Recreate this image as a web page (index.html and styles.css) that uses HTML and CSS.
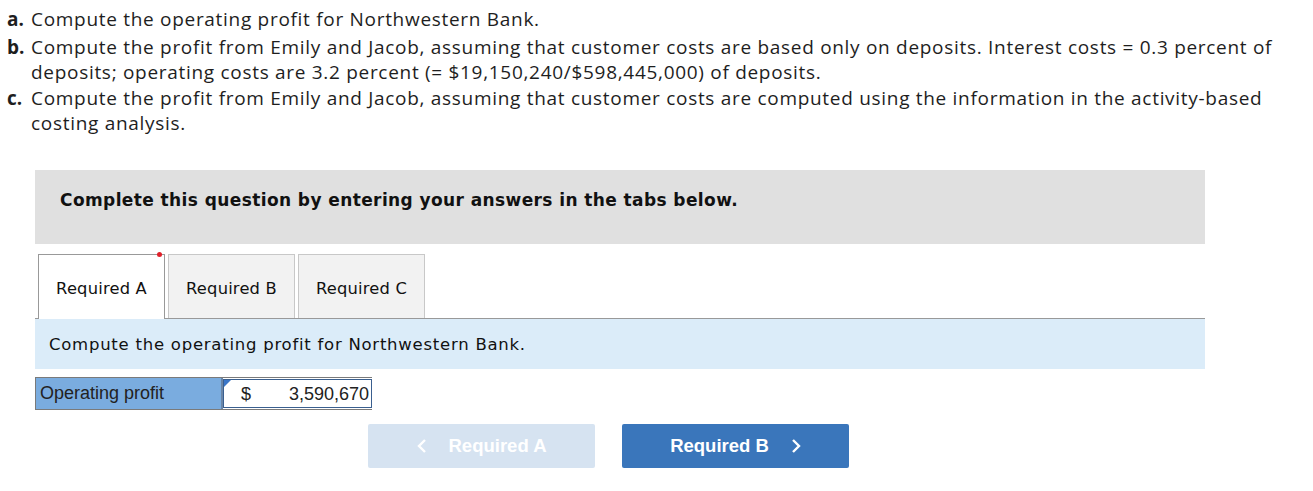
FILE: index.html
```html
<!DOCTYPE html>
<html>
<head>
<meta charset="utf-8">
<link rel="stylesheet" href="styles.css">
</head>
<body>
<div class="page">
  <ol class="parts">
    <li><b class="mk">a.</b>Compute the operating profit for Northwestern Bank.</li>
    <li><b class="mk">b.</b>Compute the profit from Emily and Jacob, assuming that customer costs are based only on deposits. Interest costs = 0.3 percent of deposits; operating costs are 3.2 percent (= $19,150,240/$598,445,000) of deposits.</li>
    <li><b class="mk">c.</b>Compute the profit from Emily and Jacob, assuming that customer costs are computed using the information in the activity-based costing analysis.</li>
  </ol>

  <div class="instructions">Complete this question by entering your answers in the tabs below.</div>

  <div class="tabs">
    <div class="tab active">Required A<span class="dot"></span></div>
    <div class="tab">Required B</div>
    <div class="tab">Required C</div>
  </div>
  <div class="prompt">Compute the operating profit for Northwestern Bank.</div>

  <div class="answer">
    <div class="label">Operating profit</div>
    <div class="input"><span class="flag"></span><span class="cur">$</span><span class="val">3,590,670</span></div>
  </div>

  <div class="nav">
    <button class="btn prev"><svg class="chev" width="10" height="16" viewBox="0 0 10 16"><path d="M8 2 L2 8 L8 14" fill="none" stroke="#fff" stroke-width="2.4"/></svg>Required A</button>
    <button class="btn next">Required B<svg class="chev" width="10" height="16" viewBox="0 0 10 16"><path d="M2 2 L8 8 L2 14" fill="none" stroke="#fff" stroke-width="2.4"/></svg></button>
  </div>
</div>
</body>
</html>
```

FILE: styles.css
```css
html, body { margin: 0; padding: 0; background: #fff; }
.page { position: relative; width: 1313px; height: 491px; }
.parts {
  list-style: none; margin: 0; padding: 7px 0 0 0;
  font-family: "Open Sans", "Lato", sans-serif; font-size: 19px; letter-spacing: 0.7px; color: #1e1e1e;
  line-height: 25.5px; width: 1300px;
}
.parts li { position: relative; padding-left: 31px; }
.parts li .mk { position: absolute; left: 7px; top: 0; font-weight: 700; letter-spacing: 0; }
.parts li:first-child { margin-bottom: 2px; }

.instructions {
  margin: 33px 0 0 35px; width: 1170px; height: 74px; box-sizing: border-box;
  background: #e0e0e0; padding: 20px 0 0 25px;
  font-family: "DejaVu Sans", Verdana, sans-serif; font-weight: bold; font-size: 17px; letter-spacing: 0.4px; color: #111;
}
.tabs {
  display: flex; margin: 10px 0 0 35px; width: 1170px; height: 65px;
  border-bottom: 1px solid #999; box-sizing: border-box; padding-left: 3px; gap: 3px; align-items: flex-end;
}
.tab {
  position: relative; width: 127px; height: 64px; box-sizing: border-box;
  border: 1px solid #c8c8c8; border-bottom: none; background: #f2f2f2;
  display: flex; align-items: center; justify-content: center; padding-top: 4px;
  font-family: "DejaVu Sans", Verdana, sans-serif; font-size: 16.3px; letter-spacing: 0.2px; color: #111;
}
.tab.active { background: #fff; border-color: #999; height: 65px; margin-bottom: -1px; }
.dot { position: absolute; top: -3px; right: 2px; width: 5px; height: 5px; border-radius: 50%; background: #e0202a; }
.prompt {
  margin-left: 35px; width: 1170px; height: 50px; box-sizing: border-box; background: #dbecf9;
  padding: 16px 0 0 14px;
  font-family: "DejaVu Sans", Verdana, sans-serif; font-size: 16.5px; letter-spacing: 0.75px; color: #111;
}
.answer {
  display: flex; margin: 8px 0 0 35px; width: 337px; height: 33px;
  border-top: 1px solid #7a7a7a; border-bottom: 1px solid #7a7a7a; border-left: 1px solid #7a7a7a;
  box-sizing: border-box;
}
.label {
  width: 187px; background: #7aacdf; border-right: 2px solid #6a86a8;
  font-family: "Liberation Sans", Arial, sans-serif; font-size: 18px; color: #222;
  padding: 5px 0 0 4px; box-sizing: border-box; letter-spacing: 0;
}
.input {
  position: relative; flex: 1; display: flex; justify-content: space-between; align-items: center;
  background: #fff; border: 1px solid #3a5f8f; margin: 1px 0; padding-top: 2px;
  font-family: "Liberation Sans", Arial, sans-serif; font-size: 18px; color: #222; padding: 2px 2px 0 17px;
}
.flag { position: absolute; left: 0; top: 0; width: 0; height: 0; border-top: 7px solid #3a76c8; border-right: 7px solid transparent; }
.nav { display: flex; gap: 27px; margin: 14px 0 0 368px; }
.btn {
  width: 227px; height: 44px; border: none; border-radius: 2px;
  font-family: "Liberation Sans", Arial, sans-serif; font-weight: bold; font-size: 18.5px; color: #fff;
  display: flex; align-items: center; justify-content: center; padding: 0;
}
.btn.prev { background: #d6e3f1; }
.btn.next { background: #3a76bb; }
.prev .chev { margin-right: 22px; }
.next .chev { margin-left: 22px; }
```
